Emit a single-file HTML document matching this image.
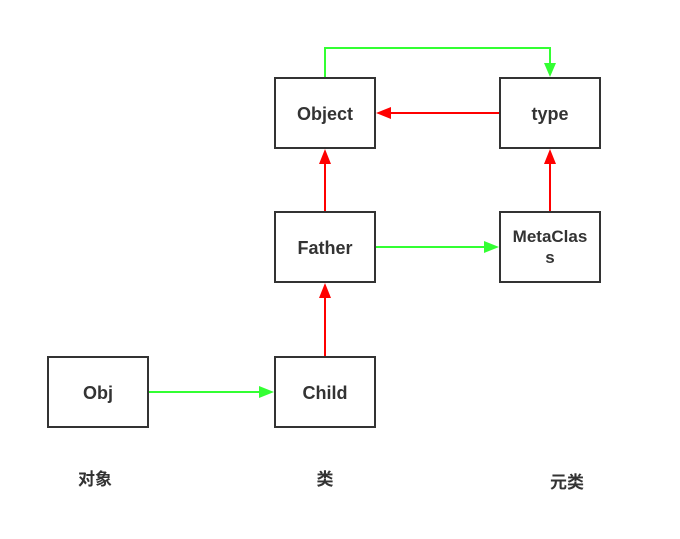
<!DOCTYPE html>
<html><head><meta charset="utf-8"><style>
body{margin:0;background:#fff;width:680px;height:534px;overflow:hidden}
</style></head><body>
<svg width="680" height="534" xmlns="http://www.w3.org/2000/svg" font-family="'Liberation Sans','Noto Sans CJK SC',sans-serif" font-weight="bold" fill="#333">
<g fill="none" stroke-width="2">
<polyline points="325,77 325,48 550,48 550,66" stroke="#33ff33"/>
<line x1="499" y1="113" x2="388" y2="113" stroke="#ff0000"/>
<line x1="325" y1="211" x2="325" y2="161" stroke="#ff0000"/>
<line x1="550" y1="211" x2="550" y2="161" stroke="#ff0000"/>
<line x1="325" y1="356" x2="325" y2="295" stroke="#ff0000"/>
<line x1="376" y1="247" x2="487" y2="247" stroke="#33ff33"/>
<line x1="149" y1="392" x2="262" y2="392" stroke="#33ff33"/>
</g>
<polygon points="544,63 556,63 550,77" fill="#33ff33"/>
<polygon points="376,113 391,107 391,119" fill="#ff0000"/>
<polygon points="325,149 319,164 331,164" fill="#ff0000"/>
<polygon points="550,149 544,164 556,164" fill="#ff0000"/>
<polygon points="325,283 319,298 331,298" fill="#ff0000"/>
<polygon points="499,247 484,241 484,253" fill="#33ff33"/>
<polygon points="274,392 259,386 259,398" fill="#33ff33"/>
<g fill="#fff" stroke="#333" stroke-width="2">
<rect x="275" y="78" width="100" height="70"/>
<rect x="500" y="78" width="100" height="70"/>
<rect x="275" y="212" width="100" height="70"/>
<rect x="500" y="212" width="100" height="70"/>
<rect x="48" y="357" width="100" height="70"/>
<rect x="275" y="357" width="100" height="70"/>
</g>
<g font-size="18" text-anchor="middle">
<text x="325" y="120">Object</text>
<text x="550" y="120">type</text>
<text x="325" y="254">Father</text>
<text x="550" y="242" font-size="17">MetaClas</text>
<text x="550" y="263" font-size="17">s</text>
<text x="98" y="399">Obj</text>
<text x="325" y="399">Child</text>
</g>
<g font-size="17" text-anchor="middle">
<text x="95" y="485">对象</text>
<text x="325" y="485">类</text>
<text x="567" y="488">元类</text>
</g>
</svg>
</body></html>
